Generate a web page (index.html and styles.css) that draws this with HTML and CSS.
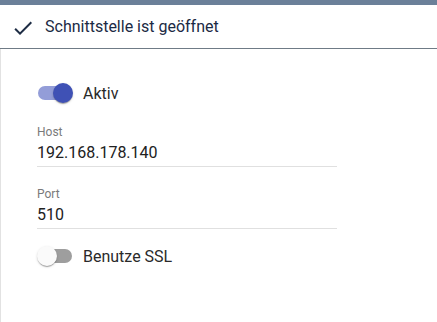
FILE: index.html
```html
<!DOCTYPE html>
<html lang="de">
<head>
<meta charset="utf-8">
<link rel="stylesheet" href="styles.css">
</head>
<body>
<div class="topbar"></div>
<header class="header">
  <svg class="check" viewBox="0 0 24 24" width="24" height="24"><path d="M9 16.17L4.83 12l-1.42 1.41L9 19 21 7l-1.41-1.41z"/></svg>
  <span class="title">Schnittstelle ist geöffnet</span>
</header>
<main class="content">
  <div class="toggle-row toggle-row--first">
    <span class="toggle toggle--on"><span class="track"></span><span class="thumb"></span></span>
    <span class="toggle-label">Aktiv</span>
  </div>
  <div class="field field--host">
    <div class="field-label">Host</div>
    <div class="field-value">192.168.178.140</div>
  </div>
  <div class="field field--port">
    <div class="field-label">Port</div>
    <div class="field-value">510</div>
  </div>
  <div class="toggle-row toggle-row--ssl">
    <span class="toggle"><span class="track"></span><span class="thumb"></span></span>
    <span class="toggle-label">Benutze SSL</span>
  </div>
</main>
</body>
</html>
```
FILE: styles.css
```css
html, body {
  margin: 0;
  padding: 0;
  background: #fff;
  height: 100%;
}
body {
  font-family: Roboto, "Noto Sans", sans-serif;
  display: flex;
  flex-direction: column;
}
.topbar {
  height: 5px;
  background: #6b8099;
  flex: none;
}
.header {
  flex: none;
  height: 43px;
  border-bottom: 1px solid #6f7b86;
  display: flex;
  align-items: center;
  padding-left: 11px;
}
.check {
  fill: #1e2d45;
  flex: none;
  margin-top: 2px;
}
.title {
  margin-left: 10px;
  font-size: 16px;
  color: #1b2a44;
}
.content {
  flex: 1;
  border-left: 1px solid #e2e2e2;
  padding-left: 36px;
  padding-top: 32px;
}
.toggle-row {
  display: flex;
  align-items: center;
  height: 24px;
}
.toggle-row--ssl {
  margin-top: 15px;
}
.toggle {
  position: relative;
  width: 36px;
  height: 24px;
  flex: none;
}
.track {
  position: absolute;
  left: 1px;
  top: 5px;
  width: 34px;
  height: 14px;
  border-radius: 7px;
  background: #9e9e9e;
}
.thumb {
  position: absolute;
  left: 0;
  top: 2px;
  width: 20px;
  height: 20px;
  border-radius: 50%;
  background: #fafafa;
  box-shadow: 0 2px 1px -1px rgba(0,0,0,.2), 0 1px 1px 0 rgba(0,0,0,.14), 0 1px 3px 0 rgba(0,0,0,.12);
}
.toggle--on .track {
  background: #939dd8;
}
.toggle--on .thumb {
  left: 16px;
  background: #3f51b5;
}
.toggle-label {
  margin-left: 10px;
  font-size: 16px;
  color: #2a2a2a;
}
.field {
  width: 300px;
  border-bottom: 1px solid #e0e0e0;
  padding-bottom: 3px;
}
.field--host {
  margin-top: 19px;
}
.field--port {
  margin-top: 19px;
}
.field-label {
  font-size: 12px;
  line-height: 16px;
  color: #7a7a7a;
}
.field-value {
  margin-top: 3px;
  font-size: 16px;
  line-height: 20px;
  color: #212121;
}
```
